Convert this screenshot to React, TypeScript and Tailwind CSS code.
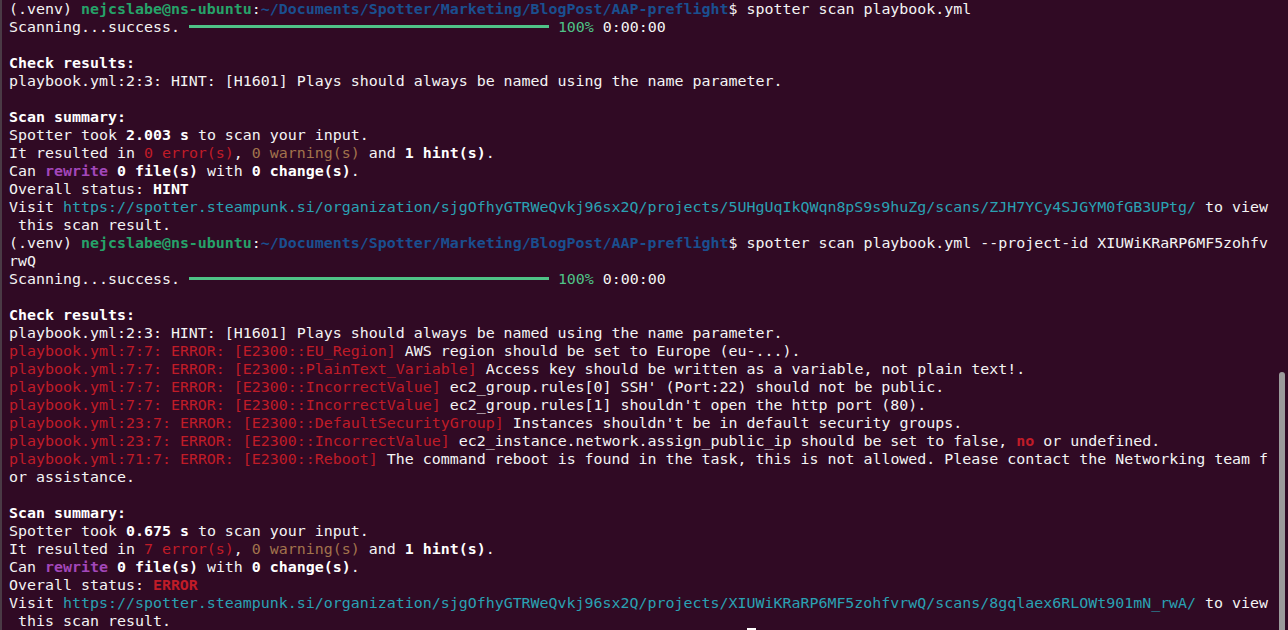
import { type ReactNode } from 'react';

const red = 'text-[#c01c28]';
const brown = 'text-[#a2734c]';
const purple = 'text-[#a347ba] font-bold';
const cyan = 'text-[#2aa1b3]';
const bold = 'font-bold text-white';

function Line({ children }: { children?: ReactNode }): ReactNode {
  return <div className="h-[18px] whitespace-pre">{children}</div>;
}

function Prompt({ cmd }: { cmd: string }): ReactNode {
  return (
    <Line>
      (.venv) <span className="font-bold text-[#26a269]">nejcslabe@ns-ubuntu</span>:
      <span className="font-bold text-[#1a4f8f]">~/Documents/Spotter/Marketing/BlogPost/AAP-preflight</span>
      {'$ '}
      {cmd}
    </Line>
  );
}

function Progress(): ReactNode {
  return (
    <Line>
      {'Scanning...success. '}
      <span className="inline-block w-[360px] h-[3px] bg-[#4fc287] align-[4px]" />
      {' '}
      <span className="text-[#4fc287]">100%</span> 0:00:00
    </Line>
  );
}

function Summary({
  took,
  errors,
  status,
  url,
}: {
  took: string;
  errors: string;
  status: ReactNode;
  url: string;
}): ReactNode {
  return (
    <>
      <Line>
        <span className={bold}>Scan summary:</span>
      </Line>
      <Line>
        Spotter took <span className={bold}>{took} s</span> to scan your input.
      </Line>
      <Line>
        It resulted in <span className={red}>{errors} error(s)</span>,{' '}
        <span className={brown}>0 warning(s)</span> and <span className={bold}>1 hint(s)</span>.
      </Line>
      <Line>
        Can <span className={purple}>rewrite</span> <span className={bold}>0 file(s)</span> with{' '}
        <span className={bold}>0 change(s)</span>.
      </Line>
      <Line>Overall status: {status}</Line>
      <Line>
        Visit <span className={cyan}>{url}</span> to view
      </Line>
      <Line> this scan result.</Line>
    </>
  );
}

function ErrorLine({ loc, rule, children }: { loc: string; rule: string; children: ReactNode }): ReactNode {
  return (
    <Line>
      <span className={red}>
        playbook.yml:{loc}: ERROR: [E2300::{rule}]
      </span>{' '}
      {children}
    </Line>
  );
}

const hint = 'playbook.yml:2:3: HINT: [H1601] Plays should always be named using the name parameter.';

export default function App(): ReactNode {
  return (
    <div
      className="relative h-[630px] overflow-hidden bg-[#300a24] border-l-2 border-[#4a3a45] pl-[7px] text-[14.95px] leading-[18px] text-[#f4f4f4]"
      style={{ fontFamily: '"DejaVu Sans Mono", "Liberation Mono", monospace' }}
    >
      <Prompt cmd="spotter scan playbook.yml" />
      <Progress />
      <Line />
      <Line>
        <span className={bold}>Check results:</span>
      </Line>
      <Line>{hint}</Line>
      <Line />
      <Summary
        took="2.003"
        errors="0"
        status={<span className={bold}>HINT</span>}
        url="https://spotter.steampunk.si/organization/sjgOfhyGTRWeQvkj96sx2Q/projects/5UHgUqIkQWqn8pS9s9huZg/scans/ZJH7YCy4SJGYM0fGB3UPtg/"
      />
      <Prompt cmd="spotter scan playbook.yml --project-id XIUWiKRaRP6MF5zohfv" />
      <Line>rwQ</Line>
      <Progress />
      <Line />
      <Line>
        <span className={bold}>Check results:</span>
      </Line>
      <Line>{hint}</Line>
      <ErrorLine loc="7:7" rule="EU_Region">
        AWS region should be set to Europe (eu-...).
      </ErrorLine>
      <ErrorLine loc="7:7" rule="PlainText_Variable">
        Access key should be written as a variable, not plain text!.
      </ErrorLine>
      <ErrorLine loc="7:7" rule="IncorrectValue">
        ec2_group.rules[0] SSH' (Port:22) should not be public.
      </ErrorLine>
      <ErrorLine loc="7:7" rule="IncorrectValue">
        ec2_group.rules[1] shouldn't open the http port (80).
      </ErrorLine>
      <ErrorLine loc="23:7" rule="DefaultSecurityGroup">
        Instances shouldn't be in default security groups.
      </ErrorLine>
      <ErrorLine loc="23:7" rule="IncorrectValue">
        ec2_instance.network.assign_public_ip should be set to false,{' '}
        <span className={`${red} font-bold`}>no</span> or undefined.
      </ErrorLine>
      <ErrorLine loc="71:7" rule="Reboot">
        The command reboot is found in the task, this is not allowed. Please contact the Networking team f
      </ErrorLine>
      <Line>or assistance.</Line>
      <Line />
      <Summary
        took="0.675"
        errors="7"
        status={<span className={`${red} font-bold`}>ERROR</span>}
        url="https://spotter.steampunk.si/organization/sjgOfhyGTRWeQvkj96sx2Q/projects/XIUWiKRaRP6MF5zohfvrwQ/scans/8gqlaex6RLOWt901mN_rwA/"
      />

      {/* Scrollbar and cursor overlay */}
      <div className="absolute right-[3px] top-[372px] bottom-0 w-[6px] rounded-t-full bg-[#9b9b9b]" />
      <div className="absolute left-[745px] top-[628px] w-[9px] h-[2px] bg-white" />
    </div>
  );
}
